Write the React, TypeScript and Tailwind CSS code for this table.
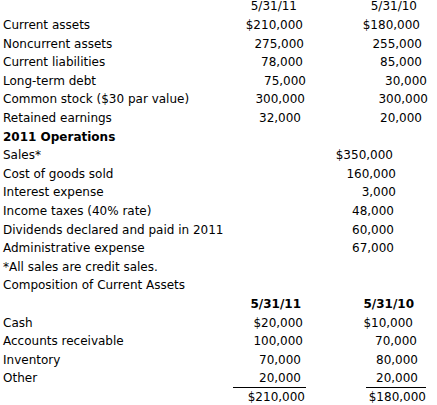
import React from "react";

type V = { t: string; pr: number };
type Row = { label: string; bold?: boolean; a?: V; b?: V; u?: boolean };

const top: Row[] = [
  { label: "", a: { t: "5/31/11", pr: 13 }, b: { t: "5/31/10", pr: 20 } },
  { label: "Current assets", a: { t: "$210,000", pr: 7 }, b: { t: "$180,000", pr: 17 } },
  { label: "Noncurrent assets", a: { t: "275,000", pr: 6 }, b: { t: "255,000", pr: 15 } },
  { label: "Current liabilities", a: { t: "78,000", pr: 7 }, b: { t: "85,000", pr: 15 } },
  { label: "Long-term debt", a: { t: "75,000", pr: 4 }, b: { t: "30,000", pr: 10 } },
  { label: "Common stock ($30 par value)", a: { t: "300,000", pr: 5 }, b: { t: "300,000", pr: 9 } },
  { label: "Retained earnings", a: { t: "32,000", pr: 9 }, b: { t: "20,000", pr: 15 } },
];

const ops: { label: string; v?: string; pr?: number }[] = [
  { label: "Sales*", v: "$350,000", pr: 44 },
  { label: "Cost of goods sold", v: "160,000", pr: 41 },
  { label: "Interest expense", v: "3,000", pr: 41 },
  { label: "Income taxes (40% rate)", v: "48,000", pr: 43 },
  { label: "Dividends declared and paid in 2011", v: "60,000", pr: 43 },
  { label: "Administrative expense", v: "67,000", pr: 43 },
  { label: "*All sales are credit sales." },
  { label: "Composition of Current Assets" },
];

const comp: Row[] = [
  { label: "", bold: true, a: { t: "5/31/11", pr: 5 }, b: { t: "5/31/10", pr: 12 } },
  { label: "Cash", a: { t: "$20,000", pr: 3 }, b: { t: "$10,000", pr: 13 } },
  { label: "Accounts receivable", a: { t: "100,000", pr: 3 }, b: { t: "70,000", pr: 9 } },
  { label: "Inventory", a: { t: "70,000", pr: 5 }, b: { t: "80,000", pr: 8 } },
  { label: "Other", u: true, a: { t: "20,000", pr: 5 }, b: { t: "20,000", pr: 8 } },
  { label: "", a: { t: "$210,000", pr: 1 }, b: { t: "$180,000", pr: 0 } },
];

const rowCls = "flex h-[18.62px] shrink-0 items-center leading-none";

export default function App() {
  return (
    <div
      className="w-[437px] h-[405px] bg-white text-black text-[12px] overflow-hidden"
      style={{ fontFamily: '"DejaVu Sans", Verdana, sans-serif' }}
    >
      <div className="flex flex-col -mt-[3px]">
        {top.map((r, i) => (
          <div key={i} className={rowCls}>
            <div className="flex-1 pl-[3px] whitespace-nowrap">{r.label}</div>
            <div className="w-[77px] text-right" style={{ paddingRight: r.a!.pr }}>
              {r.a!.t}
            </div>
            <div className="w-[127px] text-right" style={{ paddingRight: r.b!.pr }}>
              {r.b!.t}
            </div>
          </div>
        ))}
        <div className={rowCls}>
          <div className="pl-[3px] font-bold">2011 Operations</div>
        </div>
        {ops.map((r, i) => (
          <div key={i} className={rowCls}>
            <div className="flex-1 pl-[3px] whitespace-nowrap">{r.label}</div>
            {r.v && (
              <div className="w-[127px] text-right" style={{ paddingRight: r.pr }}>
                {r.v}
              </div>
            )}
          </div>
        ))}
        {comp.map((r, i) => (
          <div key={i} className={rowCls}>
            <div className="flex-1 pl-[3px] whitespace-nowrap">{r.label}</div>
            <div
              className={`w-[73px] mr-[60px] h-full flex items-center justify-end whitespace-nowrap ${r.u ? "border-b border-black" : ""} ${r.bold ? "font-bold" : ""}`}
              style={{ paddingRight: r.a!.pr }}
            >
              {r.a!.t}
            </div>
            <div
              className={`w-[60px] mr-[11px] h-full flex items-center justify-end whitespace-nowrap ${r.u ? "border-b border-black" : ""} ${r.bold ? "font-bold" : ""}`}
              style={{ paddingRight: r.b!.pr }}
            >
              {r.b!.t}
            </div>
          </div>
        ))}
      </div>
    </div>
  );
}
